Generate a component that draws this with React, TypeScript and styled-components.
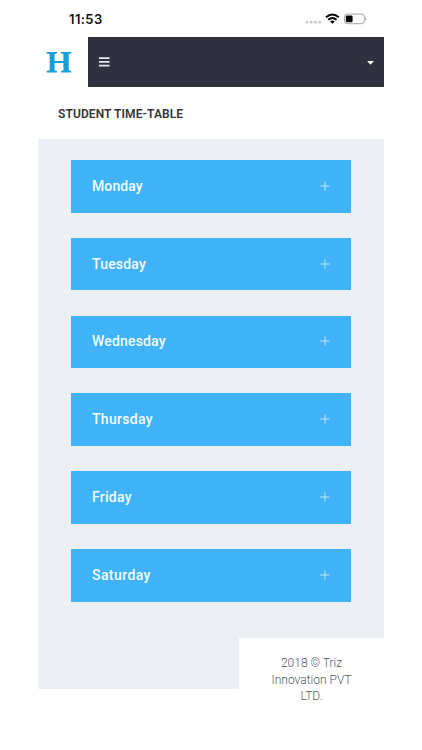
import React from "react";
import styled, { createGlobalStyle } from "styled-components";

const GlobalStyle = createGlobalStyle`
  * { box-sizing: border-box; }
  body { margin: 0; background: #fff; font-family: Roboto, "Open Sans", sans-serif; }
`;

const Screen = styled.div`
  width: 346px;
  height: 750px;
  margin-left: 38px;
  display: flex;
  flex-direction: column;
`;

const StatusBar = styled.div`
  height: 37px;
  padding: 1px 17px 0 31px;
  display: flex;
  align-items: center;
  justify-content: space-between;
`;

const Clock = styled.span`
  font: 600 13px/16px Inter, sans-serif;
  letter-spacing: 0.4px;
  color: #111;
`;

const StatusIcons = styled.svg`
  display: block;
  width: 62px;
  height: 14px;
`;

const Header = styled.header`
  height: 50px;
  display: flex;
`;

const Logo = styled.div`
  width: 50px;
  padding: 14px 0 0 8px;
`;

const NavBar = styled.nav`
  flex: 1;
  background: #2f323e;
  display: flex;
  align-items: center;
  justify-content: space-between;
  padding: 0 10px 0 11px;
`;

const NavButton = styled.button`
  display: flex;
  padding: 0;
  border: 0;
  background: none;
`;

const TitleBar = styled.div`
  height: 52px;
  padding: 2px 20px 0;
  display: flex;
  align-items: center;
`;

const Title = styled.h1`
  margin: 0;
  font-size: 12px;
  line-height: 16px;
  font-weight: 600;
  letter-spacing: 0.1px;
  color: #333537;
  white-space: nowrap;
`;

const Content = styled.main`
  height: 499px;
  padding: 21px 33px 0;
  background: #eceff4;
  display: flex;
  flex-direction: column;
  gap: 25.2px;
`;

const DayCard = styled.section`
  height: 52.6px;
  flex: none;
  padding: 0 21px 1px;
  background: #41b3f9;
  display: flex;
  align-items: center;
  justify-content: space-between;
`;

const DayName = styled.span<{ $spacing: number }>`
  font-size: 14px;
  line-height: 20px;
  font-weight: 500;
  letter-spacing: ${(p) => p.$spacing}px;
  color: #f5fcff;
`;

const BottomRow = styled.div`
  display: flex;
`;

const PanelEnd = styled.div`
  width: 201px;
  height: 51px;
  background: #eceff4;
`;

const Footer = styled.footer`
  flex: 1;
  padding: 17px 30px 0;
  font-size: 12px;
  line-height: 16.7px;
  font-weight: 300;
  letter-spacing: 0;
  color: #4d595f;
  text-align: center;
`;

const FooterLine = styled.div`
  white-space: nowrap;
`;

const days = [
  { name: "Monday", spacing: 0.1 },
  { name: "Tuesday", spacing: 0.2 },
  { name: "Wednesday", spacing: 0.17 },
  { name: "Thursday", spacing: 0.3 },
  { name: "Friday", spacing: 0.25 },
  { name: "Saturday", spacing: 0.42 },
];

export default function App() {
  return (
    <>
      <GlobalStyle />
      <Screen>
        <StatusBar>
          <Clock>11:53</Clock>
          <StatusIcons viewBox="0 0 62 14">
            <g fill="#c6c6c6">
              <circle cx="2" cy="10.2" r="1.4" />
              <circle cx="6.2" cy="10.2" r="1.4" />
              <circle cx="10.4" cy="10.2" r="1.4" />
              <circle cx="14.6" cy="10.2" r="1.4" />
            </g>
            <g fill="none" stroke="#050505" strokeWidth="1.9">
              <path d="M21 5.2Q27.4-.4 33.8 5.2" />
              <path d="M23.2 7.8Q27.4 4 31.6 7.8" />
            </g>
            <path d="M25.1 9.4Q27.4 7.5 29.7 9.4L27.4 11.8Z" fill="#050505" />
            <rect x="39.4" y="2.1" width="19.9" height="9.6" rx="2.6" fill="none" stroke="#a5a5a5" />
            <rect x="40.8" y="3.5" width="6.8" height="6.8" rx="1.2" fill="#050505" />
            <path d="M60.4 5.3Q62.6 6.8 60.4 8.4Z" fill="#999" />
          </StatusIcons>
        </StatusBar>
        <Header>
          <Logo>
            <svg width="26" height="24" viewBox="0 0 26 24" fill="#169fd9">
              <path d="M.5 1H11V2.5L8.6 3.1V10H17.4V3.1L15 2.5V1H25.3V2.5L22.7 3.1V19.3L25.3 20V21.5H15V20L17.4 19.3V12H8.6V19.3L11 20V21.5H.5V20L3.7 19.3V3.1L.5 2.5Z" />
            </svg>
          </Logo>
          <NavBar>
            <NavButton aria-label="Menu">
              <svg width="11" height="10" viewBox="0 0 11 10" fill="#e8e9ef">
                <path d="M0 .3H10.5V2H0ZM0 4H10.5V5.7H0ZM0 7.7H10.5V9.4H0Z" />
              </svg>
            </NavButton>
            <NavButton aria-label="Account">
              <svg width="7" height="5" viewBox="0 0 7 5" fill="#fff">
                <path d="M.1 1H6.9L3.5 4.7Z" />
              </svg>
            </NavButton>
          </NavBar>
        </Header>
        <TitleBar>
          <Title>STUDENT TIME-TABLE</Title>
        </TitleBar>
        <Content>
          {days.map((day) => (
            <DayCard key={day.name}>
              <DayName $spacing={day.spacing}>{day.name}</DayName>
              <svg width="10" height="10" viewBox="0 0 10 10" stroke="#c5e9ff" strokeWidth="0.9">
                <path d="M.3 5H9.7M5 .3V9.7" />
              </svg>
            </DayCard>
          ))}
        </Content>
        <BottomRow>
          <PanelEnd />
          <Footer>
            <FooterLine>2018 © Triz</FooterLine>
            <FooterLine>Innovation PVT</FooterLine>
            <FooterLine>LTD.</FooterLine>
          </Footer>
        </BottomRow>
      </Screen>
    </>
  );
}
